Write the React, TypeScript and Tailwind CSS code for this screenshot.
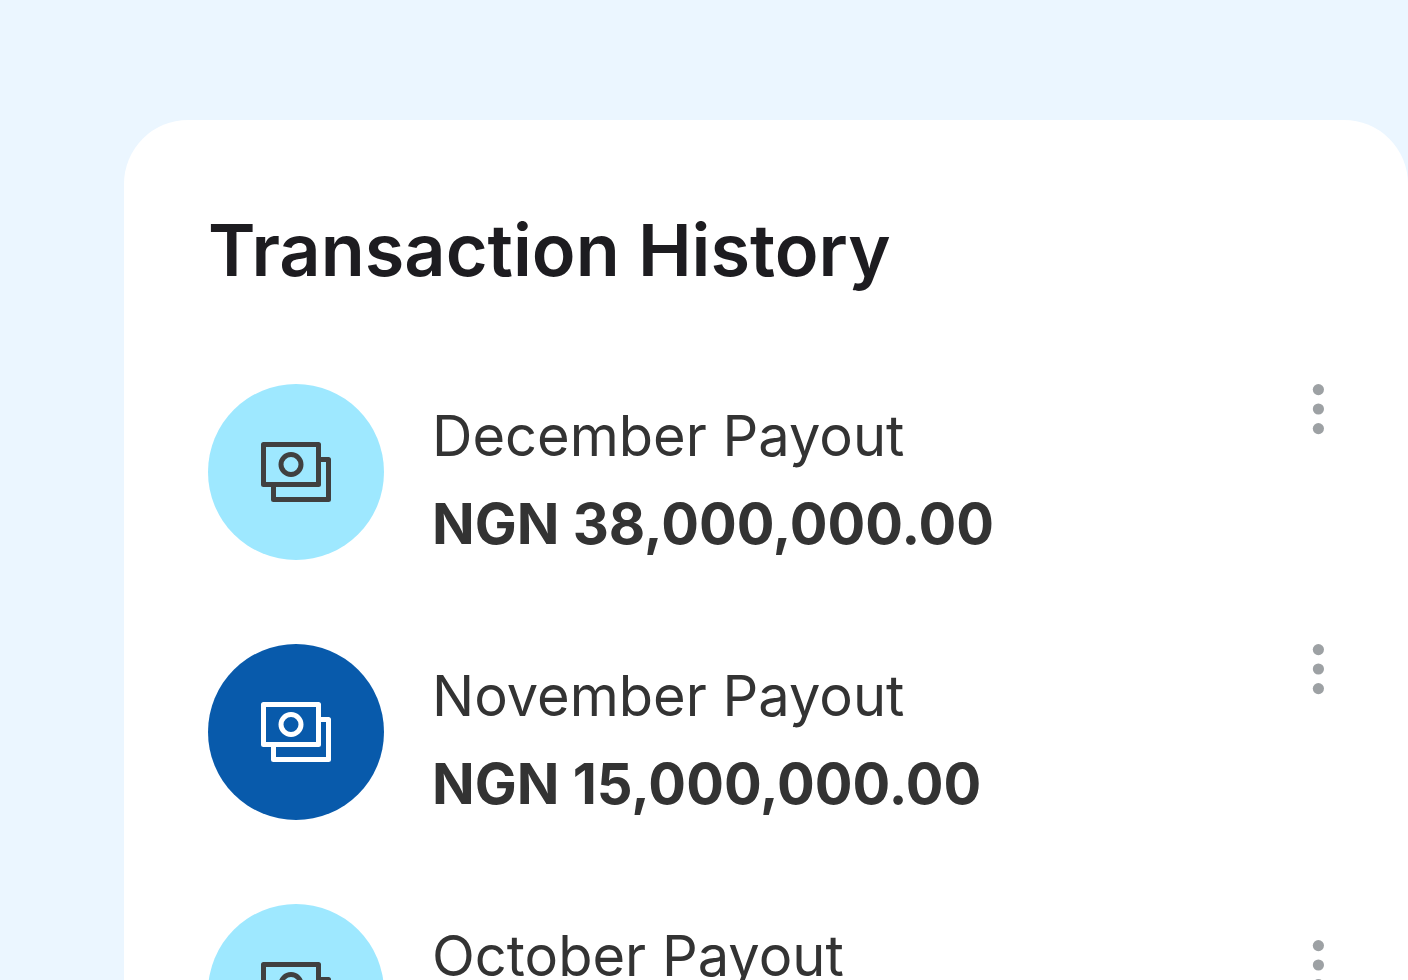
type Payout = { month: string; amount?: string; tone: "light" | "dark" };

const payouts: Payout[] = [
  { month: "December", amount: "38,000,000.00", tone: "light" },
  { month: "November", amount: "15,000,000.00", tone: "dark" },
  { month: "October", tone: "light" },
];

function CashIcon() {
  return (
    <svg viewBox="0 0 70 60" className="h-[60px] w-[70px]" fill="none" stroke="currentColor" strokeWidth="5" strokeLinejoin="round" aria-hidden="true">
      <rect x="2.5" y="2.5" width="55" height="40" />
      <circle cx="30" cy="22.5" r="10" />
      <path d="M57.5 17.5h10v40h-55v-15" />
    </svg>
  );
}

function DotsIcon() {
  return (
    <svg viewBox="0 0 12 52" className="h-[52px] w-3" fill="currentColor" aria-hidden="true">
      <circle cx="6.4" cy="5.6" r="5.6" />
      <circle cx="6.4" cy="25" r="5.6" />
      <circle cx="6.4" cy="44.6" r="5.6" />
    </svg>
  );
}

export default function App() {
  return (
    <div className="h-screen overflow-hidden bg-[#ebf6ff] pt-[120px] pl-[124px] font-['Inter',sans-serif]">
      <main className="min-h-screen rounded-[64px] bg-white px-[84px] pt-[84px]">
        <h1 className="text-[72px] leading-[92px] font-semibold text-[#1d1c20]">Transaction History</h1>
        <ul className="mt-[88px] flex flex-col gap-20">
          {payouts.map((p) => (
            <li key={p.month} className="flex items-start gap-12">
              <span
                className={
                  p.tone === "dark"
                    ? "flex size-44 shrink-0 items-center justify-center rounded-full bg-[#085aab] text-white"
                    : "flex size-44 shrink-0 items-center justify-center rounded-full bg-[#9ee8ff] text-[#404040]"
                }
              >
                <CashIcon />
              </span>
              <div className="flex grow flex-col gap-2 pt-3 text-[56px] leading-[80px] text-[#333333]">
                <p>{p.month} Payout</p>
                {p.amount && <p className="font-bold">NGN {p.amount}</p>}
              </div>
              <button
                type="button"
                aria-label={`${p.month} payout options`}
                className={p.amount ? "text-[#9da1a4]" : "mt-9 text-[#9da1a4]"}
              >
                <DotsIcon />
              </button>
            </li>
          ))}
        </ul>
      </main>
    </div>
  );
}
